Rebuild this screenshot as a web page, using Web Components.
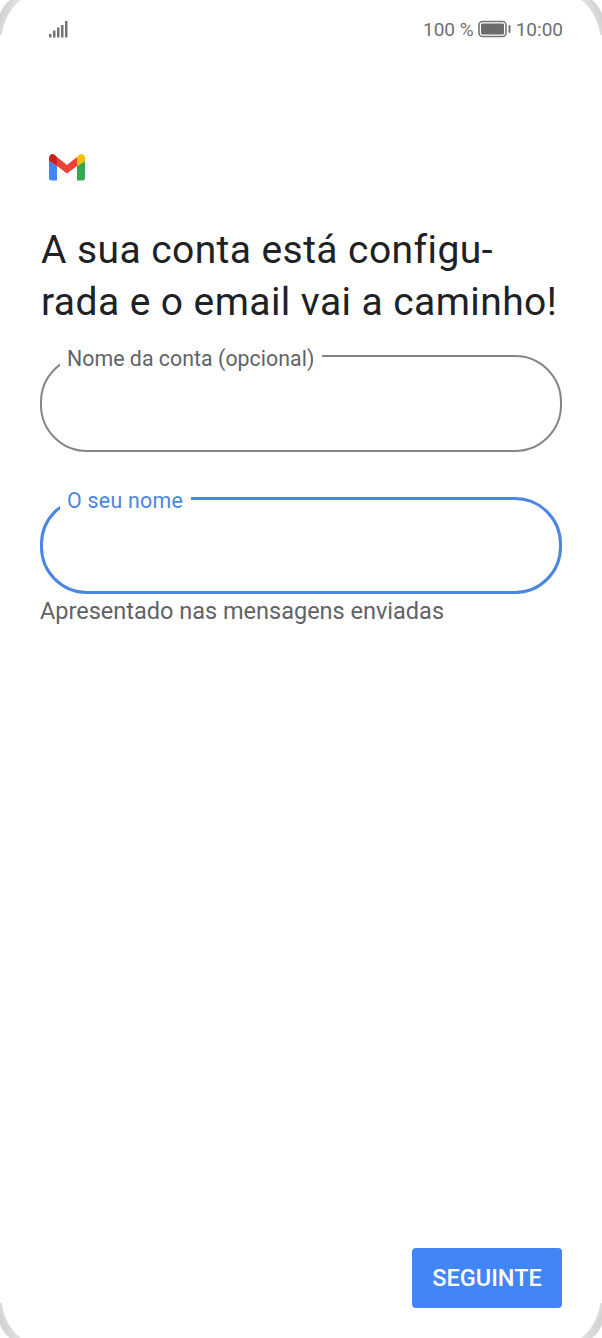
<!DOCTYPE html>
<html lang="pt">
<head>
<meta charset="utf-8">
<title>Gmail</title>
<style>
  html, body { margin: 0; padding: 0; background: #fff; }
</style>
</head>
<body>
<setup-screen>
  <status-bar slot="status"></status-bar>
  <gmail-logo slot="logo"></gmail-logo>
  <span slot="title">A sua conta está configu-<br>rada e o email vai a caminho!</span>
  <outline-field slot="fields" label="Nome da conta (opcional)"></outline-field>
  <outline-field slot="fields" label="O seu nome" focused hint="Apresentado nas mensagens enviadas"></outline-field>
  <primary-button slot="action">SEGUINTE</primary-button>
</setup-screen>

<script>
class SetupScreen extends HTMLElement {
  constructor() {
    super();
    this.attachShadow({ mode: 'open' });
  }

  connectedCallback() {
    this.shadowRoot.innerHTML = `
      <style>
        :host {
          display: flex;
          flex-direction: column;
          position: relative;
          width: 602px;
          height: 1338px;
          overflow: hidden;
          background: #fff;
          font-family: Roboto, "Liberation Sans", sans-serif;
        }
        .logo { padding: 94px 0 0 48px; }
        h1 {
          margin: 43px 0 0 41px;
          font-size: 39px;
          letter-spacing: 0.42px;
          line-height: 52px;
          font-weight: 400;
          color: #202124;
          white-space: nowrap;
        }
        .fields {
          display: flex;
          flex-direction: column;
          gap: 31px;
          margin: 13px 40px 0;
        }
        .action {
          display: flex;
          justify-content: flex-end;
          margin-top: auto;
          padding: 0 40px 30px 0;
        }
        .corner { position: absolute; width: 24px; height: 36px; }
        .tl { left: 0; top: 0; }
        .tr { right: 0; top: 0; transform: scaleX(-1); }
        .bl { left: 0; bottom: 0; transform: scaleY(-1); }
        .br { right: 0; bottom: 0; transform: scale(-1, -1); }
      </style>
      <slot name="status"></slot>
      <div class="logo"><slot name="logo"></slot></div>
      <h1><slot name="title"></slot></h1>
      <div class="fields"><slot name="fields"></slot></div>
      <div class="action"><slot name="action"></slot></div>
      ${['tl', 'tr', 'bl', 'br'].map(c => `
        <svg class="corner ${c}" viewBox="0 0 24 36">
          <defs>
            <linearGradient id="fade-${c}" x1="0" y1="0" x2="1" y2="0.6">
              <stop offset="0" stop-color="#c9c9c9"/>
              <stop offset="1" stop-color="#efefef"/>
            </linearGradient>
          </defs>
          <path fill="url(#fade-${c})" d="M10 0H21C11 7 4 20 1.5 35H0V14C2 8 6 3 10 0Z"/>
        </svg>
      `).join('')}
    `;
  }
}

class StatusBar extends HTMLElement {
  constructor() {
    super();
    this.attachShadow({ mode: 'open' });
  }

  connectedCallback() {
    this.shadowRoot.innerHTML = `
      <style>
        :host {
          display: flex;
          align-items: center;
          justify-content: space-between;
          height: 58px;
          padding: 0 39px 0 49px;
          font-size: 19px;
          color: #6f6f6f;
        }
        .right { display: flex; align-items: center; gap: 4px; }
        svg { display: block; }
      </style>
      <svg width="20" height="18" viewBox="0 0 20 18" fill="#757575">
        <rect x="0" y="14" width="2.5" height="3.5"/>
        <rect x="4" y="10.5" width="2.5" height="7"/>
        <rect x="8" y="7.5" width="2.5" height="10"/>
        <rect x="12" y="5" width="2.5" height="12.5"/>
        <rect x="16" y="1" width="2.5" height="16.5"/>
      </svg>
      <div class="right">
        <span>100 %</span>
        <svg width="34" height="18" viewBox="0 0 34 18" fill="none">
          <rect x="1" y="1.5" width="27" height="15" rx="3.5" stroke="#757575" stroke-width="1.6"/>
          <rect x="3" y="3.5" width="23" height="11" rx="1.5" fill="#6b6b6b"/>
          <rect x="30.5" y="5" width="2" height="8" rx="1" fill="#757575"/>
        </svg>
        <span>10:00</span>
      </div>
    `;
  }
}

class GmailLogo extends HTMLElement {
  constructor() {
    super();
    this.attachShadow({ mode: 'open' });
  }

  connectedCallback() {
    this.shadowRoot.innerHTML = `
      <style>
        :host { display: block; width: 38px; height: 29px; }
        svg { display: block; }
      </style>
      <svg width="38" height="29" viewBox="0 0 38 29">
        <path fill="#4285f4" d="M1 9V26C1 27.4 2.1 28.5 3.5 28.5H9V14Z"/>
        <path fill="#34a853" d="M29 14V28.5H34.5C35.9 28.5 37 27.4 37 26V9Z"/>
        <path fill="#ea4335" d="M9 14V5L19 13L29 5V14L19 21.5Z"/>
        <path fill="#c5221f" d="M1 6.5V9L9 14V5L6.5 2.8C4.1 1 1 2.7 1 6.5Z"/>
        <path fill="#fbbc04" d="M29 5V14L37 9V6.5C37 2.7 33.9 1 31.5 2.8Z"/>
      </svg>
    `;
  }
}

class OutlineField extends HTMLElement {
  constructor() {
    super();
    this.attachShadow({ mode: 'open' });
  }

  connectedCallback() {
    const hint = this.getAttribute('hint');
    this.shadowRoot.innerHTML = `
      <style>
        :host {
          display: block;
          --line: #858585;
          --line-w: 2px;
          --label: #5f6368;
        }
        :host([focused]) {
          --line: #4a86e3;
          --line-w: 3px;
          --label: #4a86e3;
          --track: 0.3px;
        }
        fieldset {
          box-sizing: border-box;
          height: 111px;
          margin: 0;
          padding: 0 0 0 18px;
          border: var(--line-w) solid var(--line);
          border-radius: 47px;
        }
        :host([focused]) fieldset { padding-left: 17px; }
        legend {
          padding: 6px 8px 0 7px;
          font-size: 21.3px;
          letter-spacing: var(--track, 0.05px);
          line-height: 24px;
          color: var(--label);
        }
        p {
          margin: 3px 0 0;
          font-size: 23.5px;
          line-height: 28px;
          color: #5f6368;
        }
      </style>
      <fieldset><legend>${this.getAttribute('label')}</legend></fieldset>
      ${hint ? `<p>${hint}</p>` : ''}
    `;
  }
}

class PrimaryButton extends HTMLElement {
  constructor() {
    super();
    this.attachShadow({ mode: 'open' });
  }

  connectedCallback() {
    this.shadowRoot.innerHTML = `
      <style>
        :host {
          display: flex;
          align-items: center;
          justify-content: center;
          width: 150px;
          height: 60px;
          border-radius: 4px;
          background: #4285f4;
          color: #fff;
          font-size: 23.5px;
          font-weight: 500;
        }
      </style>
      <slot></slot>
    `;
  }
}

customElements.define('setup-screen', SetupScreen);
customElements.define('status-bar', StatusBar);
customElements.define('gmail-logo', GmailLogo);
customElements.define('outline-field', OutlineField);
customElements.define('primary-button', PrimaryButton);
</script>
</body>
</html>
